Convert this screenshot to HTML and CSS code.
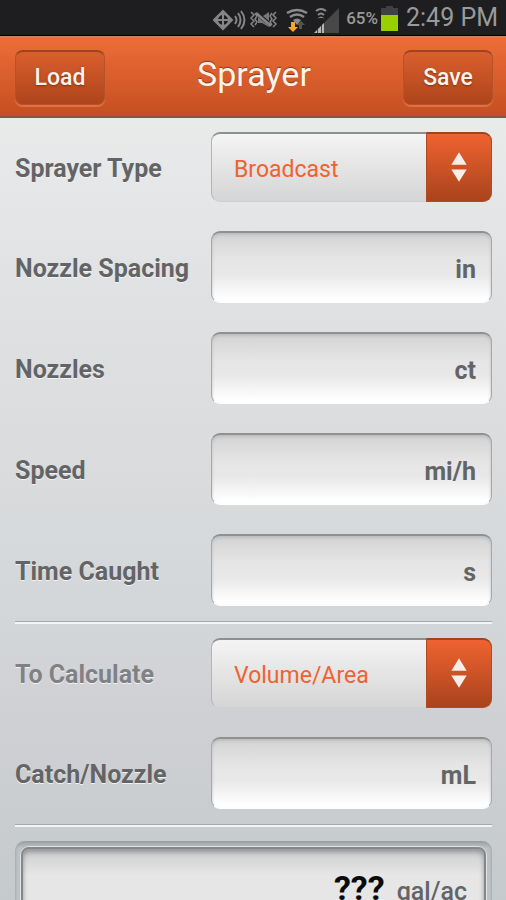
FILE: index.html
```html
<!DOCTYPE html>
<html lang="en">
<head>
<meta charset="utf-8">
<meta name="viewport" content="width=device-width, initial-scale=1">
<title>Sprayer</title>
<link rel="stylesheet" href="styles.css">
</head>
<body>
<div class="screen">
  <div class="status">
    <svg class="status-icons" width="128" height="28" viewBox="0 0 128 28" aria-hidden="true">
      <g fill="none" stroke="#858585" stroke-width="2">
        <path d="M1 15 10 6l9 9-9 9z"/>
        <circle cx="10" cy="15" r="6"/>
        <path d="M10 6v18M1 15h18M22 11q3 4 0 8M25 8q5 7 0 14M28 6q7 9 0 18"/>
        <path d="M38 7l3 3-3 3 3 3-3 3 3 3M42 8l2 3-2 3 2 3-2 3M63 7l-3 3 3 3-3 3 3 3-3 3M59 8l-2 3 2 3-2 3 2 3" stroke-width="1.5"/>
        <path d="M43 8l15 13" stroke-width="2.5"/>
      </g>
      <path d="M50 11l6-4v9zM45 12l11 9v1l-7-4h-4z" fill="#777"/>
      <g fill="none" stroke="#8b8b8b" stroke-width="2.5">
        <path d="M74 8q10-6 20 0M77 12q7-5 14 0"/>
        <path d="M103 6q5-4 10 0M105 10q3-3 6 0" stroke-width="2"/>
      </g>
      <path d="M80 15q4-3 8 0l-4 5z" fill="#8b8b8b"/>
      <path d="M104 14q4-5 8 0l-2-1h-4z" fill="#8b8b8b"/>
      <path d="M78 17h4v5h3l-5 5-5-5h3z" fill="#f6a52b"/>
      <path d="M86 24v-4h-2l4-4 4 4h-3v4z" fill="#59524a"/>
      <path d="M101 28 126 3v25z" fill="#484848"/>
      <path d="M101 28l3-3v3zM105 28v-4l3-3v7zM109 28v-8l2-2v10z" fill="#b5b5b5"/>
    </svg>
    <span class="percent">65%</span>
    <svg class="battery" width="17" height="25" viewBox="0 0 17 25" aria-hidden="true">
      <path d="M5 0h7v2h5v23H0V2h5z" fill="#3f4241"/>
      <path d="M0 9h17v16H0z" fill="#98d000"/>
    </svg>
    <span class="clock">2:49 PM</span>
  </div>

  <header class="bar">
    <button class="bar-button" type="button">Load</button>
    <h1 class="title">Sprayer</h1>
    <button class="bar-button" type="button">Save</button>
  </header>

  <form class="form">
    <div class="group">
      <div class="row">
        <label class="label" for="type">Sprayer Type</label>
        <div class="picker">
          <select class="select" id="type"><option>Broadcast</option></select>
          <svg class="arrows" viewBox="0 0 66 70" aria-hidden="true"><path d="M33 19l8 13H25zM33 50l8-13H25z"/></svg>
        </div>
      </div>
      <div class="row">
        <label class="label" for="spacing">Nozzle Spacing</label>
        <div class="field"><input class="input" id="spacing" type="text"><span class="unit">in</span></div>
      </div>
      <div class="row">
        <label class="label" for="nozzles">Nozzles</label>
        <div class="field"><input class="input" id="nozzles" type="text"><span class="unit">ct</span></div>
      </div>
      <div class="row">
        <label class="label" for="speed">Speed</label>
        <div class="field"><input class="input" id="speed" type="text"><span class="unit">mi/h</span></div>
      </div>
      <div class="row">
        <label class="label" for="time">Time Caught</label>
        <div class="field"><input class="input" id="time" type="text"><span class="unit">s</span></div>
      </div>
    </div>
    <div class="group">
      <div class="row">
        <label class="label label-soft" for="calculate">To Calculate</label>
        <div class="picker">
          <select class="select" id="calculate"><option>Volume/Area</option></select>
          <svg class="arrows" viewBox="0 0 66 70" aria-hidden="true"><path d="M33 19l8 13H25zM33 50l8-13H25z"/></svg>
        </div>
      </div>
      <div class="row">
        <label class="label" for="catch">Catch/Nozzle</label>
        <div class="field"><input class="input" id="catch" type="text"><span class="unit">mL</span></div>
      </div>
    </div>
    <div class="result">
      <output class="result-face"><strong class="value">???</strong><span>gal/ac</span></output>
    </div>
  </form>
</div>
</body>
</html>
```
FILE: styles.css
```css
* {
  box-sizing: border-box;
}

body {
  margin: 0;
  font-family: Roboto, "Liberation Sans", sans-serif;
  color: #636466;
}

.screen {
  height: 100vh;
  overflow: hidden;
  background: linear-gradient(#e9eaea 118px, #e0e1e3 300px, #d3d6d8 620px, #cfd0d3 720px, #c5cacd);
}

.status {
  display: flex;
  align-items: center;
  justify-content: flex-end;
  height: 36px;
  padding-right: 8px;
  background: #1e1e20;
  border-bottom: 1px solid #000;
  color: #9a9a9a;
}

.status-icons {
  margin: 2px 5px 0 0;
}

.percent {
  font-size: 17px;
  font-weight: 500;
  margin-right: 3px;
}

.battery {
  margin: 2px 8px 0 0;
}

.clock {
  font-size: 25px;
}

.bar {
  display: flex;
  align-items: center;
  justify-content: space-between;
  height: 82px;
  padding: 0 13px 0 15px;
  background: linear-gradient(#ed6d37, #c44f21);
  border-top: 2px solid #c98262;
  border-bottom: 2px solid #8b5440;
  color: #fdf3ec;
}

.bar-button {
  width: 90px;
  height: 55px;
  border: 1px solid #b4532b;
  border-top: 2px solid #9d4521;
  border-radius: 8px;
  background: linear-gradient(#da5f2e, #ae441a);
  box-shadow: 0 2px 1px #e07346;
  color: inherit;
  font: 500 23px Roboto, sans-serif;
  text-shadow: 0 1px 2px #7c3215;
}

.title {
  margin: 0 0 6px;
  font-size: 34px;
  font-weight: 400;
  text-shadow: 0 -1px 1px #8a3a19;
}

.form {
  padding: 14px 14px 0 15px;
}

.group {
  display: grid;
  gap: 29px;
  padding-bottom: 15px;
  margin-bottom: 15px;
  border-bottom: 1px solid #a5a7aa;
  box-shadow: 0 2px #f3f4f5;
}

.group + .group {
  margin-top: 16px;
}

.row {
  display: grid;
  grid-template-columns: 196px 1fr;
  align-items: center;
}

.label {
  padding-top: 3px;
  font-size: 25px;
  font-weight: 700;
  white-space: nowrap;
  text-shadow: 0 1px #f2f2f2;
}

.label-soft {
  color: #808184;
}

.picker,
.field {
  display: grid;
  align-items: center;
}

.picker > *,
.field > * {
  grid-area: 1 / 1;
}

.select {
  appearance: none;
  width: 100%;
  height: 70px;
  padding: 3px 76px 0 22px;
  border: 1px solid #b4b4b5;
  border-top: 2px solid #8f8f90;
  border-bottom-color: #d0d0d1;
  border-radius: 9px;
  background: linear-gradient(#f4f4f4, #d6d5d6);
  color: #f0622f;
  font: 400 23px Roboto, sans-serif;
}

.arrows {
  justify-self: end;
  width: 66px;
  height: 70px;
  border: 1px solid #b14b22;
  border-top: 2px solid #a04420;
  border-radius: 0 9px 9px 0;
  background: linear-gradient(#ef6330, #a9431c);
  fill: #f7eee9;
  pointer-events: none;
}

.input {
  width: 100%;
  height: 72px;
  padding: 0 74px 0 18px;
  border: 1px solid #a8a8a9;
  border-top: 2px solid #909091;
  border-bottom-color: #fff;
  border-radius: 9px;
  background: linear-gradient(#d4d3d4, #e5e5e5 38%, #e8e8e8 60%, #fff 95%);
  box-shadow: inset 0 2px 3px #bdbdbe;
  color: inherit;
  font: 500 24px Roboto, sans-serif;
}

.unit {
  justify-self: end;
  padding: 4px 16px 0 0;
  font-size: 25px;
  font-weight: 700;
  pointer-events: none;
}

.result {
  margin-top: 16px;
  padding: 6px;
  border-radius: 10px;
  background: linear-gradient(#9da2a5, #bcc1c4 7px, #c1c6c9);
  box-shadow: inset 0 0 3px #8e9497;
}

.result-face {
  display: flex;
  align-items: baseline;
  justify-content: flex-end;
  gap: 12px;
  height: 90px;
  padding: 22px 17px 0 0;
  border: 2px solid #85888a;
  border-radius: 8px;
  background: linear-gradient(#ccc, #e6e6e6 26px);
  box-shadow: 0 0 0 1px #dfe2e4, inset 0 3px 5px #919394;
  font-size: 25px;
  font-weight: 500;
}

.value {
  color: #0b0b0b;
  font-size: 34px;
  line-height: 34px;
}
```
